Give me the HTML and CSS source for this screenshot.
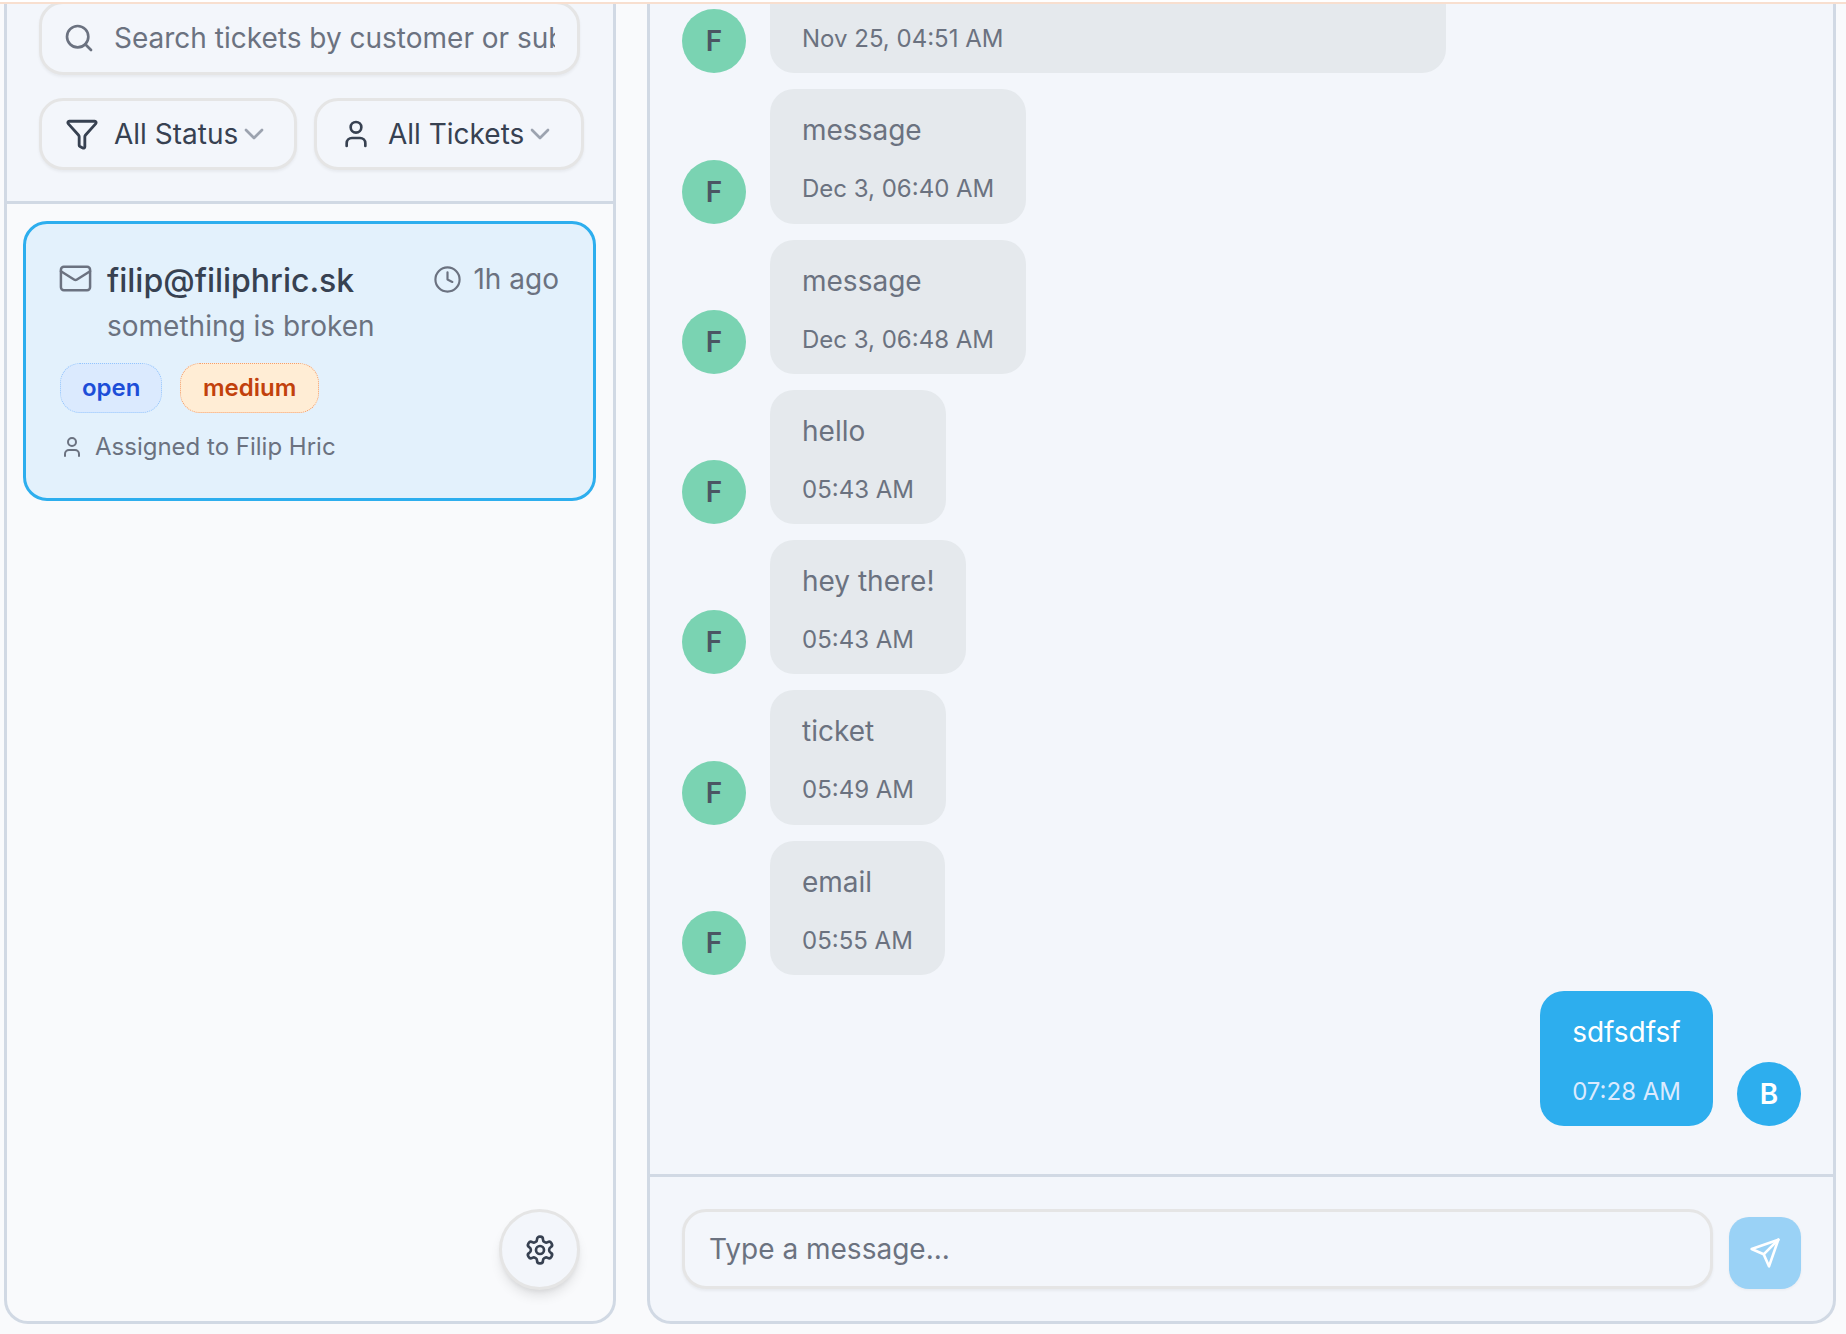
FILE: index.html
```html
<!DOCTYPE html>
<html lang="en">
<head>
<meta charset="utf-8">
<title>Tickets</title>
<link rel="stylesheet" href="styles.css">
</head>
<body>
<div class="topline"></div>
<main class="app">
  <aside class="sidebar">
    <header class="side-head">
      <label class="search">
        <svg class="ic ic-search" viewBox="0 0 24 24"><circle cx="11" cy="11" r="8"/><path d="m21 21-4.3-4.3"/></svg>
        <input class="search-input" type="text" placeholder="Search tickets by customer or subject...">
      </label>
      <div class="filters">
        <button class="filter filter-status">
          <svg class="ic ic-filter" viewBox="0 0 24 24"><path d="M10 20a1 1 0 0 0 .553.895l2 1A1 1 0 0 0 14 21v-7a2 2 0 0 1 .517-1.341L21.74 4.67A1 1 0 0 0 21 3H3a1 1 0 0 0-.742 1.67l7.225 7.989A2 2 0 0 1 10 14z"/></svg>
          <span>All Status</span>
          <svg class="ic ic-chev" viewBox="0 0 24 24"><path d="m6 9 6 6 6-6"/></svg>
        </button>
        <button class="filter filter-tickets">
          <svg class="ic ic-user" viewBox="0 0 24 24"><path d="M19 21v-2a4 4 0 0 0-4-4H9a4 4 0 0 0-4 4v2"/><circle cx="12" cy="7" r="4"/></svg>
          <span>All Tickets</span>
          <svg class="ic ic-chev" viewBox="0 0 24 24"><path d="m6 9 6 6 6-6"/></svg>
        </button>
      </div>
    </header>
    <section class="ticket-list">
      <article class="ticket">
        <div class="ticket-top">
          <svg class="ic ic-mail" viewBox="0 0 24 24"><rect x="2" y="4" width="20" height="16" rx="2"/><path d="m22 7-8.97 5.7a1.94 1.94 0 0 1-2.06 0L2 7"/></svg>
          <div class="ticket-main">
            <div class="ticket-line">
              <h2 class="ticket-name">filip@filiphric.sk</h2>
              <div class="ticket-time">
                <svg class="ic ic-clock" viewBox="0 0 24 24"><circle cx="12" cy="12" r="10"/><path d="M12 6v6l4 2"/></svg>
                <span>1h ago</span>
              </div>
            </div>
            <p class="ticket-subject">something is broken</p>
          </div>
        </div>
        <div class="badges">
          <span class="badge badge-open">open</span>
          <span class="badge badge-medium">medium</span>
        </div>
        <div class="assigned">
          <svg class="ic ic-small-user" viewBox="0 0 24 24"><path d="M19 21v-2a4 4 0 0 0-4-4H9a4 4 0 0 0-4 4v2"/><circle cx="12" cy="7" r="4"/></svg>
          <span>Assigned to Filip Hric</span>
        </div>
      </article>
    </section>
    <button class="settings">
      <svg class="ic ic-gear" viewBox="0 0 24 24"><path d="M12.22 2h-.44a2 2 0 0 0-2 2v.18a2 2 0 0 1-1 1.73l-.43.25a2 2 0 0 1-2 0l-.15-.08a2 2 0 0 0-2.73.73l-.22.38a2 2 0 0 0 .73 2.73l.15.1a2 2 0 0 1 1 1.72v.51a2 2 0 0 1-1 1.74l-.15.09a2 2 0 0 0-.73 2.73l.22.38a2 2 0 0 0 2.73.73l.15-.08a2 2 0 0 1 2 0l.43.25a2 2 0 0 1 1 1.73V20a2 2 0 0 0 2 2h.44a2 2 0 0 0 2-2v-.18a2 2 0 0 1 1-1.73l.43-.25a2 2 0 0 1 2 0l.15.08a2 2 0 0 0 2.73-.73l.22-.39a2 2 0 0 0-.73-2.73l-.15-.08a2 2 0 0 1-1-1.74v-.5a2 2 0 0 1 1-1.74l.15-.09a2 2 0 0 0 .73-2.73l-.22-.38a2 2 0 0 0-2.73-.73l-.15.08a2 2 0 0 1-2 0l-.43-.25a2 2 0 0 1-1-1.73V4a2 2 0 0 0-2-2z"/><circle cx="12" cy="12" r="3"/></svg>
    </button>
  </aside>
  <section class="chat">
    <div class="messages">
      <div class="msg"><div class="avatar">F</div><div class="bubble bubble-wide"><p class="msg-text"></p><time class="msg-time">Nov 25, 04:51 AM</time></div></div>
      <div class="msg"><div class="avatar">F</div><div class="bubble"><p class="msg-text">message</p><time class="msg-time">Dec 3, 06:40 AM</time></div></div>
      <div class="msg"><div class="avatar">F</div><div class="bubble"><p class="msg-text">message</p><time class="msg-time">Dec 3, 06:48 AM</time></div></div>
      <div class="msg"><div class="avatar">F</div><div class="bubble"><p class="msg-text">hello</p><time class="msg-time">05:43 AM</time></div></div>
      <div class="msg"><div class="avatar">F</div><div class="bubble"><p class="msg-text">hey there!</p><time class="msg-time">05:43 AM</time></div></div>
      <div class="msg"><div class="avatar">F</div><div class="bubble"><p class="msg-text">ticket</p><time class="msg-time">05:49 AM</time></div></div>
      <div class="msg"><div class="avatar">F</div><div class="bubble"><p class="msg-text">email</p><time class="msg-time">05:55 AM</time></div></div>
      <div class="msg msg-own"><div class="bubble bubble-own"><p class="msg-text">sdfsdfsf</p><time class="msg-time">07:28 AM</time></div><div class="avatar avatar-own">B</div></div>
    </div>
    <footer class="composer">
      <input class="composer-input" type="text" placeholder="Type a message...">
      <button class="send">
        <svg class="ic ic-send" viewBox="0 0 24 24"><path d="m22 2-7 20-4-9-9-4Z"/><path d="M22 2 11 13"/></svg>
      </button>
    </footer>
  </section>
</main>
</body>
</html>
```
FILE: styles.css
```css
* { box-sizing: border-box; }
html, body { margin: 0; height: 100%; }
body {
  height: 1334px;
  overflow: hidden;
  background: #f9fafc;
  font-family: Inter, "Liberation Sans", sans-serif;
  color: #374151;
  display: flex;
  flex-direction: column;
}
button, input { font-family: inherit; }
h2, p { margin: 0; }

.topline { height: 4px; flex: none; border-top: 2px solid #fff; background: #f8dfcf; }

.app {
  flex: none;
  height: 1320px;
  display: flex;
  padding-left: 4px;
  gap: 31px;
}

.ic { fill: none; stroke: currentColor; stroke-width: 2; stroke-linecap: round; stroke-linejoin: round; flex: none; display: block; }

/* Sidebar */
.sidebar {
  position: relative;
  width: 612px;
  flex: none;
  display: flex;
  flex-direction: column;
  border: 3px solid #d1d9e4;
  border-top: 0;
  border-radius: 0 0 24px 24px;
  background: #f9fafc;
  overflow: hidden;
}
.side-head {
  flex: none;
  background: #f3f6fb;
  padding: 0 20px 31px 32px;
  border-bottom: 3px solid #d1d9e4;
  display: flex;
  flex-direction: column;
  gap: 23px;
}
.search {
  margin-top: -3px;
  width: 541px;
  height: 74px;
  display: flex;
  align-items: center;
  gap: 19px;
  padding: 0 22px 0 21px;
  border: 3px solid #e5e5e5;
  border-radius: 24px;
  background: #f3f6fb;
  box-shadow: 0 2px 3px rgba(0, 0, 0, .05);
  color: #6b7280;
}
.ic-search { width: 32px; height: 32px; }
.search-input {
  flex: 1;
  min-width: 0;
  border: 0;
  outline: 0;
  padding: 0;
  background: transparent;
  font-size: 28px;
  color: #6b7280;
}
.search-input::placeholder, .composer-input::placeholder { color: #6b7280; opacity: 1; }

.filters { display: flex; gap: 17px; flex: none; }
.filter {
  height: 72px;
  flex: none;
  display: flex;
  align-items: center;
  padding: 0;
  border: 3px solid #e5e5e5;
  border-radius: 24px;
  background: #f3f6fb;
  box-shadow: 0 2px 3px rgba(0, 0, 0, .05);
  font-size: 28px;
  color: #374151;
}
.filter-status { width: 258px; padding-left: 23px; }
.filter-tickets { width: 270px; padding-left: 23px; }
.ic-filter { width: 34px; height: 34px; margin-right: 15px; }
.ic-user { width: 32px; height: 32px; margin-right: 16px; }
.ic-chev { width: 32px; height: 32px; color: #9ca3af; margin-left: 0; }

.ticket-list { flex: 1; padding: 17px 17px 16px 16px; }
.ticket {
  height: 280px;
  border: 3px solid #2daeee;
  border-radius: 24px;
  background: #e3f1fc;
  padding: 35px 34px 0;
}
.ticket-top { display: flex; gap: 14px; }
.ic-mail { width: 35px; height: 35px; color: #6b7280; margin: 2px 0 0 -2px; stroke-width: 1.7; }
.ticket-main { flex: 1; min-width: 0; }
.ticket-line { display: flex; justify-content: space-between; }
.ticket-name { font-size: 32px; font-weight: 500; line-height: 44px; color: #374151; }
.ticket-time { display: flex; align-items: center; gap: 11px; font-size: 28px; color: #6b7280; height: 40px; }
.ic-clock { width: 29px; height: 29px; stroke-width: 1.8; }
.ticket-subject { font-size: 28px; line-height: 42px; color: #6b7280; margin-top: 2px; }
.badges { display: flex; gap: 18px; margin-top: 16px; }
.badge {
  height: 50px;
  display: flex;
  align-items: center;
  padding-bottom: 2px;
  border-radius: 20px;
  font-size: 24px;
  font-weight: 600;
}
.badge-open { padding-left: 21px; padding-right: 21px; background: #dbeafe; border: 1px dotted #93c5fd; color: #1d4ed8; }
.badge-medium { padding-left: 21.5px; padding-right: 21.5px; background: #ffedd5; border: 1px dotted #f59e6b; color: #c2410c; }
.assigned { display: flex; align-items: center; gap: 11px; margin-top: 16px; font-size: 24px; line-height: 36px; color: #6b7280; }
.ic-small-user { width: 24px; height: 24px; }

.settings {
  position: absolute;
  right: 33px;
  bottom: 31px;
  width: 81px;
  height: 81px;
  display: flex;
  align-items: center;
  justify-content: center;
  padding: 0;
  border: 3px solid #e5e5e5;
  border-radius: 50%;
  background: #f3f6fb;
  color: #374151;
  box-shadow: 0 8px 12px -2px rgba(0, 0, 0, .1), 0 3px 5px -2px rgba(0, 0, 0, .08);
}
.ic-gear { width: 32px; height: 32px; }

/* Chat */
.chat {
  width: 1189px;
  flex: none;
  display: flex;
  flex-direction: column;
  border: 3px solid #d1d9e4;
  border-top: 0;
  border-radius: 0 0 24px 24px;
  background: #f3f6fb;
  overflow: hidden;
}
.messages {
  flex: 1;
  min-height: 0;
  overflow: hidden;
  display: flex;
  flex-direction: column;
  justify-content: flex-end;
  gap: 16px;
  padding: 0 32px 48px 32px;
}
.msg { display: flex; align-items: flex-end; gap: 24px; flex: none; }
.msg-own { justify-content: flex-end; }
.avatar {
  width: 64px;
  height: 64px;
  flex: none;
  border-radius: 50%;
  background: #7ad3b2;
  color: #4b5563;
  display: flex;
  align-items: center;
  justify-content: center;
  font-size: 28px;
  font-weight: 600;
}
.avatar-own { background: #2daeee; color: #fff; }
.bubble {
  padding: 25px 32px 0;
  border-radius: 24px;
  background: #e5e9ed;
  color: #6b7280;
  height: 134.3px;
}
.bubble-wide { width: 676px; }
.bubble-own { background: #2daeee; color: #fff; height: 135px; }
.msg-text { font-size: 28px; line-height: 32px; min-height: 32px; }
.msg-time { display: block; margin-top: 25px; font-size: 24px; line-height: 36px; }
.bubble-own .msg-time { color: #dbeafe; margin-top: 26px; }

.composer {
  flex: none;
  height: 147px;
  border-top: 3px solid #d1d9e4;
  display: flex;
  align-items: flex-start;
  gap: 16px;
  padding: 32px 31px 0 32px;
}
.composer-input {
  width: 1031px;
  height: 80px;
  padding: 0 24px;
  border: 3px solid #e5e5e5;
  border-radius: 24px;
  outline: 0;
  background: #f3f6fb;
  box-shadow: 0 2px 3px rgba(0, 0, 0, .05);
  font-size: 28px;
  color: #6b7280;
}
.send {
  width: 72px;
  height: 72px;
  margin-top: 8px;
  padding: 0;
  border: 0;
  border-radius: 20px;
  background: #9ad2f6;
  color: #fff;
  display: flex;
  align-items: center;
  justify-content: center;
  box-shadow: 0 1px 3px rgba(0, 0, 0, .05);
}
.ic-send { width: 32px; height: 32px; stroke-width: 2; }
```
